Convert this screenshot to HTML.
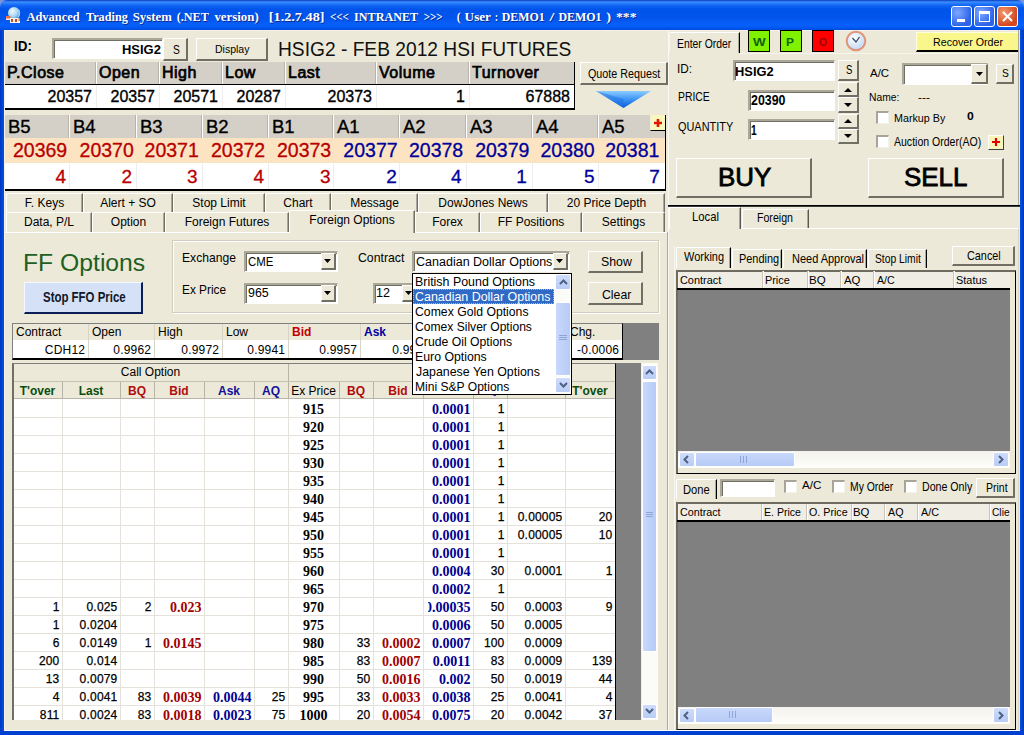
<!DOCTYPE html><html><head><meta charset="utf-8"><style>
*{margin:0;padding:0;box-sizing:border-box}
html,body{width:1024px;height:735px;overflow:hidden;background:#ECE9D8;font-family:"Liberation Sans",sans-serif;}
.a{position:absolute}
.serif{font-family:"Liberation Serif",serif}
.t{white-space:nowrap;line-height:1}
.btn{background:#ECE9D8;border-style:solid;border-width:1px 2px 2px 1px;border-color:#fff #716F64 #716F64 #fff;}
.sunk{background:#fff;border-style:solid;border-width:2px 1px 1px 2px;border-color:#ACA899 #fff #fff #ACA899;box-shadow:inset 1px 1px 0 #716F64;}
.sb{background:linear-gradient(#CFDCFB,#B9CCF5);border:1px solid #fff;border-radius:2px}
</style></head><body><div class="a " style="left:0px;top:0px;width:8px;height:8px;background:#7C93DF"></div>
<div class="a " style="left:1016px;top:0px;width:8px;height:8px;background:#7C93DF"></div>
<div class="a" style="left:0;top:0;width:1024px;height:30px;background:linear-gradient(#0A3CC0 0px,#3A8FFF 2px,#1568F6 5px,#0054EA 9px,#0255EC 18px,#0860FA 25px,#0058F0 28px,#0048DA 30px);border-radius:7px 7px 0 0"></div>
<div class="a " style="left:0px;top:30px;width:4px;height:705px;background:linear-gradient(90deg,#0036C2,#0054E3)"></div>
<div class="a " style="left:1020px;top:30px;width:4px;height:705px;background:linear-gradient(90deg,#0054E3,#0033B8)"></div>
<div class="a " style="left:0px;top:731px;width:1024px;height:4px;background:#0040D0"></div>
<svg class="a" style="left:0;top:0" width="700" height="30" font-family="Liberation Serif" font-weight="bold" font-size="13"><text x="27.4" y="22" textLength="53.300000000000004" lengthAdjust="spacingAndGlyphs" fill="#0A2A8E">Advanced</text><text x="26.4" y="21" textLength="53.300000000000004" lengthAdjust="spacingAndGlyphs" fill="#fff">Advanced</text><text x="86.9" y="22" textLength="42.0" lengthAdjust="spacingAndGlyphs" fill="#0A2A8E">Trading</text><text x="85.9" y="21" textLength="42.0" lengthAdjust="spacingAndGlyphs" fill="#fff">Trading</text><text x="133.7" y="22" textLength="39.10000000000002" lengthAdjust="spacingAndGlyphs" fill="#0A2A8E">System</text><text x="132.7" y="21" textLength="39.10000000000002" lengthAdjust="spacingAndGlyphs" fill="#fff">System</text><text x="177.7" y="22" textLength="32.20000000000002" lengthAdjust="spacingAndGlyphs" fill="#0A2A8E">(.NET</text><text x="176.7" y="21" textLength="32.20000000000002" lengthAdjust="spacingAndGlyphs" fill="#fff">(.NET</text><text x="215.4" y="22" textLength="44.29999999999998" lengthAdjust="spacingAndGlyphs" fill="#0A2A8E">version)</text><text x="214.4" y="21" textLength="44.29999999999998" lengthAdjust="spacingAndGlyphs" fill="#fff">version)</text><text x="269.8" y="22" textLength="55.69999999999999" lengthAdjust="spacingAndGlyphs" fill="#0A2A8E">[1.2.7.48]</text><text x="268.8" y="21" textLength="55.69999999999999" lengthAdjust="spacingAndGlyphs" fill="#fff">[1.2.7.48]</text><text x="330.9" y="22" textLength="19.0" lengthAdjust="spacingAndGlyphs" fill="#0A2A8E">&lt;&lt;&lt;</text><text x="329.9" y="21" textLength="19.0" lengthAdjust="spacingAndGlyphs" fill="#fff">&lt;&lt;&lt;</text><text x="355.1" y="22" textLength="64.09999999999997" lengthAdjust="spacingAndGlyphs" fill="#0A2A8E">INTRANET</text><text x="354.1" y="21" textLength="64.09999999999997" lengthAdjust="spacingAndGlyphs" fill="#fff">INTRANET</text><text x="424.7" y="22" textLength="18.900000000000034" lengthAdjust="spacingAndGlyphs" fill="#0A2A8E">&gt;&gt;&gt;</text><text x="423.7" y="21" textLength="18.900000000000034" lengthAdjust="spacingAndGlyphs" fill="#fff">&gt;&gt;&gt;</text><text x="457.8" y="22" textLength="3.8999999999999773" lengthAdjust="spacingAndGlyphs" fill="#0A2A8E">(</text><text x="456.8" y="21" textLength="3.8999999999999773" lengthAdjust="spacingAndGlyphs" fill="#fff">(</text><text x="465.6" y="22" textLength="26.399999999999977" lengthAdjust="spacingAndGlyphs" fill="#0A2A8E">User</text><text x="464.6" y="21" textLength="26.399999999999977" lengthAdjust="spacingAndGlyphs" fill="#fff">User</text><text x="495.9" y="22" textLength="3.0" lengthAdjust="spacingAndGlyphs" fill="#0A2A8E">:</text><text x="494.9" y="21" textLength="3.0" lengthAdjust="spacingAndGlyphs" fill="#fff">:</text><text x="502.8" y="22" textLength="42.900000000000034" lengthAdjust="spacingAndGlyphs" fill="#0A2A8E">DEMO1</text><text x="501.8" y="21" textLength="42.900000000000034" lengthAdjust="spacingAndGlyphs" fill="#fff">DEMO1</text><text x="550.6" y="22" textLength="4.899999999999977" lengthAdjust="spacingAndGlyphs" fill="#0A2A8E">/</text><text x="549.6" y="21" textLength="4.899999999999977" lengthAdjust="spacingAndGlyphs" fill="#fff">/</text><text x="559.4" y="22" textLength="43.0" lengthAdjust="spacingAndGlyphs" fill="#0A2A8E">DEMO1</text><text x="558.4" y="21" textLength="43.0" lengthAdjust="spacingAndGlyphs" fill="#fff">DEMO1</text><text x="607.2" y="22" textLength="4.7999999999999545" lengthAdjust="spacingAndGlyphs" fill="#0A2A8E">)</text><text x="606.2" y="21" textLength="4.7999999999999545" lengthAdjust="spacingAndGlyphs" fill="#fff">)</text><text x="617" y="22" textLength="20.5" lengthAdjust="spacingAndGlyphs" fill="#0A2A8E">***</text><text x="616" y="21" textLength="20.5" lengthAdjust="spacingAndGlyphs" fill="#fff">***</text></svg>
<svg class="a" style="left:0;top:0" width="24" height="24"><defs><radialGradient id="gl" cx=".35" cy=".35" r=".75"><stop offset="0" stop-color="#F2FAFF"/><stop offset=".6" stop-color="#A8D4F4"/><stop offset="1" stop-color="#3D8FDC"/></radialGradient></defs><circle cx="14" cy="13" r="6" fill="url(#gl)"/><path d="M18.5 9.5 Q21 13 18 17.5" stroke="#9ED2F8" stroke-width="1.2" fill="none"/><rect x="6" y="16" width="4.5" height="3" fill="#F07040"/><rect x="6" y="18.5" width="4.5" height="1.5" fill="#FFE8D8"/><rect x="10" y="18" width="10" height="5" fill="#FFF4EC"/><rect x="11" y="19" width="2" height="3" fill="#C84A20"/><rect x="15" y="19" width="2" height="3" fill="#C84A20"/><rect x="18.5" y="18" width="1.5" height="3" fill="#E8783C"/></svg>
<div class="a " style="left:951px;top:6px;width:21px;height:21px;background:radial-gradient(circle at 30% 30%,#7DA8FF,#2D63E8 70%);border:1px solid #fff;border-radius:3px"></div>
<div class="a " style="left:974px;top:6px;width:21px;height:21px;background:radial-gradient(circle at 30% 30%,#7DA8FF,#2D63E8 70%);border:1px solid #fff;border-radius:3px"></div>
<div class="a " style="left:997px;top:6px;width:21px;height:21px;background:radial-gradient(circle at 30% 30%,#F39A70,#D5481F 70%);border:1px solid #fff;border-radius:3px"></div>
<div class="a " style="left:957px;top:19px;width:8px;height:3px;background:#fff"></div>
<div class="a " style="left:979px;top:11px;width:11px;height:11px;border:1px solid #fff;border-top-width:3px"></div>
<svg class="a" style="left:1001px;top:10px" width="13" height="13"><path d="M2 2 L11 11 M11 2 L2 11" stroke="#fff" stroke-width="2"/></svg>
<div class="a " style="left:4px;top:30px;width:1016px;height:1px;background:#F4F2E8"></div>
<div class="a t" style="left:13.73px;top:38.81px;font-size:14.93px;font-weight:bold;color:#000;transform:scaleX(0.8989);transform-origin:0 0;">ID:</div>
<div class="a sunk" style="left:52px;top:38px;width:111px;height:21px;"></div>
<div class="a t" style="left:121.86px;top:42.82px;font-size:13.62px;font-weight:bold;color:#000;transform:scaleX(0.9508);transform-origin:0 0;">HSIG2</div>
<div class="a btn" style="left:163px;top:38px;width:25px;height:23px;"></div>
<div class="a t" style="left:172.94px;top:44.05px;font-size:12.17px;color:#000;transform:scaleX(0.8429);transform-origin:0 0;">S</div>
<div class="a btn" style="left:196px;top:38px;width:72px;height:23px;"></div>
<div class="a t" style="left:214.86px;top:44.19px;font-size:11.30px;color:#000;transform:scaleX(0.9288);transform-origin:0 0;">Display</div>
<div class="a t" style="left:278.46px;top:39.43px;font-size:20.43px;color:#111;transform:scaleX(0.9397);transform-origin:0 0;">HSIG2 - FEB 2012 HSI FUTURES</div>
<div class="a " style="left:4px;top:62px;width:571px;height:22px;background:#D4D0C8"></div>
<div class="a " style="left:4px;top:84px;width:571px;height:1px;background:#000"></div>
<div class="a " style="left:4px;top:85px;width:571px;height:23px;background:#fff"></div>
<div class="a " style="left:4px;top:108px;width:571px;height:2px;background:#000"></div>
<div class="a " style="left:574px;top:62px;width:1px;height:48px;background:#000"></div>
<div class="a t " style="left:7px;top:65px;font-size:16px;letter-spacing:0.5px;-webkit-text-stroke:0.7px #000">P.Close</div>
<div class="a t" style="left:4px;width:88px;top:88.5px;text-align:right;font-size:16px;-webkit-text-stroke:0.35px #000">20357</div>
<div class="a " style="left:96px;top:62px;width:1px;height:22px;background:#fff"></div>
<div class="a " style="left:95px;top:62px;width:1px;height:22px;background:#B8B4A8"></div>
<div class="a " style="left:96px;top:85px;width:1px;height:23px;background:#EEEEEE"></div>
<div class="a t " style="left:99px;top:65px;font-size:16px;letter-spacing:0.5px;-webkit-text-stroke:0.7px #000">Open</div>
<div class="a t" style="left:96px;width:59px;top:88.5px;text-align:right;font-size:16px;-webkit-text-stroke:0.35px #000">20357</div>
<div class="a " style="left:159px;top:62px;width:1px;height:22px;background:#fff"></div>
<div class="a " style="left:158px;top:62px;width:1px;height:22px;background:#B8B4A8"></div>
<div class="a " style="left:159px;top:85px;width:1px;height:23px;background:#EEEEEE"></div>
<div class="a t " style="left:162px;top:65px;font-size:16px;letter-spacing:0.5px;-webkit-text-stroke:0.7px #000">High</div>
<div class="a t" style="left:159px;width:59px;top:88.5px;text-align:right;font-size:16px;-webkit-text-stroke:0.35px #000">20571</div>
<div class="a " style="left:222px;top:62px;width:1px;height:22px;background:#fff"></div>
<div class="a " style="left:221px;top:62px;width:1px;height:22px;background:#B8B4A8"></div>
<div class="a " style="left:222px;top:85px;width:1px;height:23px;background:#EEEEEE"></div>
<div class="a t " style="left:225px;top:65px;font-size:16px;letter-spacing:0.5px;-webkit-text-stroke:0.7px #000">Low</div>
<div class="a t" style="left:222px;width:59px;top:88.5px;text-align:right;font-size:16px;-webkit-text-stroke:0.35px #000">20287</div>
<div class="a " style="left:285px;top:62px;width:1px;height:22px;background:#fff"></div>
<div class="a " style="left:284px;top:62px;width:1px;height:22px;background:#B8B4A8"></div>
<div class="a " style="left:285px;top:85px;width:1px;height:23px;background:#EEEEEE"></div>
<div class="a t " style="left:288px;top:65px;font-size:16px;letter-spacing:0.5px;-webkit-text-stroke:0.7px #000">Last</div>
<div class="a t" style="left:285px;width:87px;top:88.5px;text-align:right;font-size:16px;-webkit-text-stroke:0.35px #000">20373</div>
<div class="a " style="left:376px;top:62px;width:1px;height:22px;background:#fff"></div>
<div class="a " style="left:375px;top:62px;width:1px;height:22px;background:#B8B4A8"></div>
<div class="a " style="left:376px;top:85px;width:1px;height:23px;background:#EEEEEE"></div>
<div class="a t " style="left:379px;top:65px;font-size:16px;letter-spacing:0.5px;-webkit-text-stroke:0.7px #000">Volume</div>
<div class="a t" style="left:376px;width:89px;top:88.5px;text-align:right;font-size:16px;-webkit-text-stroke:0.35px #000">1</div>
<div class="a " style="left:469px;top:62px;width:1px;height:22px;background:#fff"></div>
<div class="a " style="left:468px;top:62px;width:1px;height:22px;background:#B8B4A8"></div>
<div class="a " style="left:469px;top:85px;width:1px;height:23px;background:#EEEEEE"></div>
<div class="a t " style="left:472px;top:65px;font-size:16px;letter-spacing:0.5px;-webkit-text-stroke:0.7px #000">Turnover</div>
<div class="a t" style="left:469px;width:101px;top:88.5px;text-align:right;font-size:16px;-webkit-text-stroke:0.35px #000">67888</div>
<div class="a btn" style="left:580px;top:62px;width:88px;height:23px;"></div>
<div class="a t" style="left:587.82px;top:68.48px;font-size:12.61px;color:#000;transform:scaleX(0.8519);transform-origin:0 0;">Quote Request</div>
<svg class="a" style="left:595px;top:89.5px" width="58" height="19"><defs><linearGradient id="tg" x1="0" y1="0" x2="0" y2="1"><stop offset="0" stop-color="#8CCBFF"/><stop offset=".5" stop-color="#3C94F4"/><stop offset="1" stop-color="#0A5BD8"/></linearGradient></defs><path d="M1 1 L56 1 L28.5 18 Z" fill="url(#tg)"/><path d="M1 1 L28.5 18 L28.5 9 Z" fill="#1F6FE0" opacity=".45"/></svg>
<div class="a " style="left:4px;top:115px;width:662px;height:23px;background:#D4D0C8"></div>
<div class="a " style="left:4px;top:138px;width:662px;height:25px;background:#FCE4C2"></div>
<div class="a " style="left:4px;top:163px;width:662px;height:26px;background:#fff"></div>
<div class="a " style="left:4px;top:189px;width:662px;height:2px;background:#000"></div>
<div class="a " style="left:665px;top:115px;width:1px;height:76px;background:#000"></div>
<div class="a t " style="left:8px;top:117.5px;font-size:18.5px;-webkit-text-stroke:0.35px #000">B5</div>
<div class="a t" style="left:4px;width:63.2px;top:140.5px;text-align:right;font-size:19.5px;color:#B80000;-webkit-text-stroke:0.3px #B80000">20369</div>
<div class="a t" style="left:4px;width:62.1px;top:167px;text-align:right;font-size:19px;color:#B80000;-webkit-text-stroke:0.3px #B80000">4</div>
<div class="a " style="left:69px;top:115px;width:1px;height:23px;background:#fff"></div>
<div class="a " style="left:68px;top:115px;width:1px;height:23px;background:#B8B4A8"></div>
<div class="a " style="left:69px;top:163px;width:1px;height:26px;background:#EEEEEE"></div>
<div class="a t " style="left:73px;top:117.5px;font-size:18.5px;-webkit-text-stroke:0.35px #000">B4</div>
<div class="a t" style="left:69px;width:64.8px;top:140.5px;text-align:right;font-size:19.5px;color:#B80000;-webkit-text-stroke:0.3px #B80000">20370</div>
<div class="a t" style="left:69px;width:63.1px;top:167px;text-align:right;font-size:19px;color:#B80000;-webkit-text-stroke:0.3px #B80000">2</div>
<div class="a " style="left:136px;top:115px;width:1px;height:23px;background:#fff"></div>
<div class="a " style="left:135px;top:115px;width:1px;height:23px;background:#B8B4A8"></div>
<div class="a " style="left:136px;top:163px;width:1px;height:26px;background:#EEEEEE"></div>
<div class="a t " style="left:140px;top:117.5px;font-size:18.5px;-webkit-text-stroke:0.35px #000">B3</div>
<div class="a t" style="left:136px;width:62.8px;top:140.5px;text-align:right;font-size:19.5px;color:#B80000;-webkit-text-stroke:0.3px #B80000">20371</div>
<div class="a t" style="left:136px;width:61.6px;top:167px;text-align:right;font-size:19px;color:#B80000;-webkit-text-stroke:0.3px #B80000">3</div>
<div class="a " style="left:202px;top:115px;width:1px;height:23px;background:#fff"></div>
<div class="a " style="left:201px;top:115px;width:1px;height:23px;background:#B8B4A8"></div>
<div class="a " style="left:202px;top:163px;width:1px;height:26px;background:#EEEEEE"></div>
<div class="a t " style="left:206px;top:117.5px;font-size:18.5px;-webkit-text-stroke:0.35px #000">B2</div>
<div class="a t" style="left:202px;width:63.2px;top:140.5px;text-align:right;font-size:19.5px;color:#B80000;-webkit-text-stroke:0.3px #B80000">20372</div>
<div class="a t" style="left:202px;width:62.1px;top:167px;text-align:right;font-size:19px;color:#B80000;-webkit-text-stroke:0.3px #B80000">4</div>
<div class="a " style="left:268px;top:115px;width:1px;height:23px;background:#fff"></div>
<div class="a " style="left:267px;top:115px;width:1px;height:23px;background:#B8B4A8"></div>
<div class="a " style="left:268px;top:163px;width:1px;height:26px;background:#EEEEEE"></div>
<div class="a t " style="left:272px;top:117.5px;font-size:18.5px;-webkit-text-stroke:0.35px #000">B1</div>
<div class="a t" style="left:268px;width:63.2px;top:140.5px;text-align:right;font-size:19.5px;color:#B80000;-webkit-text-stroke:0.3px #B80000">20373</div>
<div class="a t" style="left:268px;width:62.5px;top:167px;text-align:right;font-size:19px;color:#B80000;-webkit-text-stroke:0.3px #B80000">3</div>
<div class="a " style="left:333px;top:115px;width:1px;height:23px;background:#fff"></div>
<div class="a " style="left:332px;top:115px;width:1px;height:23px;background:#B8B4A8"></div>
<div class="a " style="left:333px;top:163px;width:1px;height:26px;background:#EEEEEE"></div>
<div class="a t " style="left:337px;top:117.5px;font-size:18.5px;-webkit-text-stroke:0.35px #000">A1</div>
<div class="a t" style="left:333px;width:64.6px;top:140.5px;text-align:right;font-size:19.5px;color:#00009A;-webkit-text-stroke:0.3px #00009A">20377</div>
<div class="a t" style="left:333px;width:63.9px;top:167px;text-align:right;font-size:19px;color:#00009A;-webkit-text-stroke:0.3px #00009A">2</div>
<div class="a " style="left:399px;top:115px;width:1px;height:23px;background:#fff"></div>
<div class="a " style="left:398px;top:115px;width:1px;height:23px;background:#B8B4A8"></div>
<div class="a " style="left:399px;top:163px;width:1px;height:26px;background:#EEEEEE"></div>
<div class="a t " style="left:403px;top:117.5px;font-size:18.5px;-webkit-text-stroke:0.35px #000">A2</div>
<div class="a t" style="left:399px;width:64.2px;top:140.5px;text-align:right;font-size:19.5px;color:#00009A;-webkit-text-stroke:0.3px #00009A">20378</div>
<div class="a t" style="left:399px;width:62.7px;top:167px;text-align:right;font-size:19px;color:#00009A;-webkit-text-stroke:0.3px #00009A">4</div>
<div class="a " style="left:466px;top:115px;width:1px;height:23px;background:#fff"></div>
<div class="a " style="left:465px;top:115px;width:1px;height:23px;background:#B8B4A8"></div>
<div class="a " style="left:466px;top:163px;width:1px;height:26px;background:#EEEEEE"></div>
<div class="a t " style="left:470px;top:117.5px;font-size:18.5px;-webkit-text-stroke:0.35px #000">A3</div>
<div class="a t" style="left:466px;width:63.4px;top:140.5px;text-align:right;font-size:19.5px;color:#00009A;-webkit-text-stroke:0.3px #00009A">20379</div>
<div class="a t" style="left:466px;width:60.8px;top:167px;text-align:right;font-size:19px;color:#00009A;-webkit-text-stroke:0.3px #00009A">1</div>
<div class="a " style="left:532px;top:115px;width:1px;height:23px;background:#fff"></div>
<div class="a " style="left:531px;top:115px;width:1px;height:23px;background:#B8B4A8"></div>
<div class="a " style="left:532px;top:163px;width:1px;height:26px;background:#EEEEEE"></div>
<div class="a t " style="left:536px;top:117.5px;font-size:18.5px;-webkit-text-stroke:0.35px #000">A4</div>
<div class="a t" style="left:532px;width:62.7px;top:140.5px;text-align:right;font-size:19.5px;color:#00009A;-webkit-text-stroke:0.3px #00009A">20380</div>
<div class="a t" style="left:532px;width:62.6px;top:167px;text-align:right;font-size:19px;color:#00009A;-webkit-text-stroke:0.3px #00009A">5</div>
<div class="a " style="left:598px;top:115px;width:1px;height:23px;background:#fff"></div>
<div class="a " style="left:597px;top:115px;width:1px;height:23px;background:#B8B4A8"></div>
<div class="a " style="left:598px;top:163px;width:1px;height:26px;background:#EEEEEE"></div>
<div class="a t " style="left:602px;top:117.5px;font-size:18.5px;-webkit-text-stroke:0.35px #000">A5</div>
<div class="a t" style="left:598px;width:61.4px;top:140.5px;text-align:right;font-size:19.5px;color:#00009A;-webkit-text-stroke:0.3px #00009A">20381</div>
<div class="a t" style="left:598px;width:61.8px;top:167px;text-align:right;font-size:19px;color:#00009A;-webkit-text-stroke:0.3px #00009A">7</div>
<div class="a " style="left:650px;top:115px;width:15px;height:16px;background:#FAF7BC;border-bottom:1px solid #000;border-left:1px solid #F0EFD8"></div>
<svg class="a" style="left:653px;top:118px" width="10" height="10"><path d="M5 1 V9 M1 5 H9" stroke="#E01808" stroke-width="2.6"/></svg>
<div class="a" style="left:6px;top:193px;width:77px;height:19px;border-top:1px solid #fff;border-left:1px solid #fff;border-right:1px solid #716F64;box-shadow:inset -1px 0 0 #ACA899;border-top-left-radius:2px;"></div>
<div class="a t" style="left:6px;width:77px;top:197px;text-align:center;font-size:12px">F. Keys</div>
<div class="a" style="left:83px;top:193px;width:90px;height:19px;border-top:1px solid #fff;border-left:1px solid #fff;border-right:1px solid #716F64;box-shadow:inset -1px 0 0 #ACA899;border-top-left-radius:2px;"></div>
<div class="a t" style="left:83px;width:90px;top:197px;text-align:center;font-size:12px">Alert + SO</div>
<div class="a" style="left:173px;top:193px;width:92px;height:19px;border-top:1px solid #fff;border-left:1px solid #fff;border-right:1px solid #716F64;box-shadow:inset -1px 0 0 #ACA899;border-top-left-radius:2px;"></div>
<div class="a t" style="left:173px;width:92px;top:197px;text-align:center;font-size:12px">Stop Limit</div>
<div class="a" style="left:265px;top:193px;width:66px;height:19px;border-top:1px solid #fff;border-left:1px solid #fff;border-right:1px solid #716F64;box-shadow:inset -1px 0 0 #ACA899;border-top-left-radius:2px;"></div>
<div class="a t" style="left:265px;width:66px;top:197px;text-align:center;font-size:12px">Chart</div>
<div class="a" style="left:331px;top:193px;width:87px;height:19px;border-top:1px solid #fff;border-left:1px solid #fff;border-right:1px solid #716F64;box-shadow:inset -1px 0 0 #ACA899;border-top-left-radius:2px;"></div>
<div class="a t" style="left:331px;width:87px;top:197px;text-align:center;font-size:12px">Message</div>
<div class="a" style="left:418px;top:193px;width:130px;height:19px;border-top:1px solid #fff;border-left:1px solid #fff;border-right:1px solid #716F64;box-shadow:inset -1px 0 0 #ACA899;border-top-left-radius:2px;"></div>
<div class="a t" style="left:418px;width:130px;top:197px;text-align:center;font-size:12px">DowJones News</div>
<div class="a" style="left:548px;top:193px;width:117px;height:19px;border-top:1px solid #fff;border-left:1px solid #fff;border-right:1px solid #716F64;box-shadow:inset -1px 0 0 #ACA899;border-top-left-radius:2px;"></div>
<div class="a t" style="left:548px;width:117px;top:197px;text-align:center;font-size:12px">20 Price Depth</div>
<div class="a" style="left:6px;top:212px;width:86px;height:20px;border-top:1px solid #fff;border-left:1px solid #fff;border-right:1px solid #716F64;box-shadow:inset -1px 0 0 #ACA899;border-top-left-radius:2px;"></div>
<div class="a t" style="left:6px;width:86px;top:216px;text-align:center;font-size:12px">Data, P/L</div>
<div class="a" style="left:92px;top:212px;width:73px;height:20px;border-top:1px solid #fff;border-left:1px solid #fff;border-right:1px solid #716F64;box-shadow:inset -1px 0 0 #ACA899;border-top-left-radius:2px;"></div>
<div class="a t" style="left:92px;width:73px;top:216px;text-align:center;font-size:12px">Option</div>
<div class="a" style="left:165px;top:212px;width:124px;height:20px;border-top:1px solid #fff;border-left:1px solid #fff;border-right:1px solid #716F64;box-shadow:inset -1px 0 0 #ACA899;border-top-left-radius:2px;"></div>
<div class="a t" style="left:165px;width:124px;top:216px;text-align:center;font-size:12px">Foreign Futures</div>
<div class="a" style="left:289px;top:210px;width:126px;height:23px;border-top:1px solid #fff;border-left:1px solid #fff;border-right:1px solid #716F64;box-shadow:inset -1px 0 0 #ACA899;border-top-left-radius:2px;background:#ECE9D8"></div>
<div class="a t" style="left:289px;width:126px;top:214px;text-align:center;font-size:12px">Foreign Options</div>
<div class="a" style="left:415px;top:212px;width:65px;height:20px;border-top:1px solid #fff;border-left:1px solid #fff;border-right:1px solid #716F64;box-shadow:inset -1px 0 0 #ACA899;border-top-left-radius:2px;"></div>
<div class="a t" style="left:415px;width:65px;top:216px;text-align:center;font-size:12px">Forex</div>
<div class="a" style="left:480px;top:212px;width:102px;height:20px;border-top:1px solid #fff;border-left:1px solid #fff;border-right:1px solid #716F64;box-shadow:inset -1px 0 0 #ACA899;border-top-left-radius:2px;"></div>
<div class="a t" style="left:480px;width:102px;top:216px;text-align:center;font-size:12px">FF Positions</div>
<div class="a" style="left:582px;top:212px;width:83px;height:20px;border-top:1px solid #fff;border-left:1px solid #fff;border-right:1px solid #716F64;box-shadow:inset -1px 0 0 #ACA899;border-top-left-radius:2px;"></div>
<div class="a t" style="left:582px;width:83px;top:216px;text-align:center;font-size:12px">Settings</div>
<div class="a " style="left:4px;top:232px;width:285px;height:1px;background:#fff"></div>
<div class="a " style="left:415px;top:232px;width:252px;height:1px;background:#fff"></div>
<div class="a " style="left:667px;top:232px;width:1px;height:499px;background:#ACA899"></div>
<div class="a t" style="left:22.82px;top:251.54px;font-size:23.48px;color:#1F5F1F;transform:scaleX(1.0529);transform-origin:0 0;">FF Options</div>
<div class="a " style="left:24px;top:282px;width:119px;height:32px;background:#D5E1F6;border-top:1px solid #F4F8FF;border-left:1px solid #F4F8FF;border-right:2px solid #0A1E55;border-bottom:2px solid #0A1E55"></div>
<div class="a t" style="left:42.56px;top:291.20px;font-size:13.77px;font-weight:bold;color:#101828;transform:scaleX(0.8314);transform-origin:0 0;">Stop FFO Price</div>
<div class="a " style="left:172px;top:240px;width:487px;height:73px;border:1px solid #D0CDBF;box-shadow:inset 1px 1px 0 #fff, 1px 1px 0 #fff"></div>
<div class="a t" style="left:181.73px;top:251.76px;font-size:12.75px;color:#000;transform:scaleX(0.9511);transform-origin:0 0;">Exchange</div>
<div class="a t" style="left:181.75px;top:284.03px;font-size:12.32px;color:#000;transform:scaleX(0.9597);transform-origin:0 0;">Ex Price</div>
<div class="a t" style="left:357.99px;top:251.76px;font-size:12.75px;color:#000;transform:scaleX(0.9633);transform-origin:0 0;">Contract</div>
<div class="a sunk" style="left:244px;top:251px;width:94px;height:21px;"></div>
<div class="a btn" style="left:321px;top:253px;width:15px;height:17px;"></div>
<svg class="a" style="left:324px;top:259px" width="8" height="5"><path d="M0 0 H7 L3.5 4 Z" fill="#000"/></svg>
<div class="a t" style="left:248.23px;top:255.74px;font-size:12.90px;color:#000;transform:scaleX(0.8881);transform-origin:0 0;">CME</div>
<div class="a sunk" style="left:244px;top:283px;width:94px;height:21px;"></div>
<div class="a btn" style="left:321px;top:285px;width:15px;height:17px;"></div>
<svg class="a" style="left:324px;top:291px" width="8" height="5"><path d="M0 0 H7 L3.5 4 Z" fill="#000"/></svg>
<div class="a t" style="left:248.24px;top:287.46px;font-size:12.75px;color:#000;transform:scaleX(0.9727);transform-origin:0 0;">965</div>
<div class="a sunk" style="left:373px;top:283px;width:46px;height:21px;"></div>
<div class="a btn" style="left:402px;top:285px;width:15px;height:17px;"></div>
<svg class="a" style="left:405px;top:291px" width="8" height="5"><path d="M0 0 H7 L3.5 4 Z" fill="#000"/></svg>
<div class="a t" style="left:375.56px;top:287.46px;font-size:12.75px;color:#000;transform:scaleX(0.9871);transform-origin:0 0;">12</div>
<div class="a sunk" style="left:412px;top:251px;width:158px;height:21px;"></div>
<div class="a btn" style="left:553px;top:253px;width:15px;height:17px;"></div>
<svg class="a" style="left:556px;top:259px" width="8" height="5"><path d="M0 0 H7 L3.5 4 Z" fill="#000"/></svg>
<div class="a t" style="left:415.67px;top:255.58px;font-size:12.61px;color:#000;transform:scaleX(0.9927);transform-origin:0 0;">Canadian Dollar Options</div>
<div class="a btn" style="left:588px;top:251px;width:55px;height:22px;"></div>
<div class="a t" style="left:601.15px;top:255.44px;font-size:13.48px;color:#000;transform:scaleX(0.9138);transform-origin:0 0;">Show</div>
<div class="a btn" style="left:588px;top:282px;width:55px;height:23px;"></div>
<div class="a t" style="left:602.39px;top:287.67px;font-size:13.33px;color:#000;transform:scaleX(0.9213);transform-origin:0 0;">Clear</div>
<div class="a " style="left:12px;top:323px;width:611px;height:37px;background:#fff;border-left:1px solid #808080;border-top:1px solid #808080;border-right:1px solid #000;border-bottom:2px solid #000"></div>
<div class="a " style="left:13px;top:324px;width:609px;height:16px;background:#ECE9D8"></div>
<div class="a t " style="left:16px;top:326px;font-size:12px;color:#000;">Contract</div>
<div class="a t" style="left:12px;width:73.2px;top:343.5px;text-align:right;font-size:12px;letter-spacing:.2px">CDH12</div>
<div class="a " style="left:88px;top:324px;width:1px;height:34px;background:#D8D4C8"></div>
<div class="a t " style="left:92px;top:326px;font-size:12px;color:#000;">Open</div>
<div class="a t" style="left:88px;width:63.2px;top:343.5px;text-align:right;font-size:12px;letter-spacing:.2px">0.9962</div>
<div class="a " style="left:154px;top:324px;width:1px;height:34px;background:#D8D4C8"></div>
<div class="a t " style="left:158px;top:326px;font-size:12px;color:#000;">High</div>
<div class="a t" style="left:154px;width:65.2px;top:343.5px;text-align:right;font-size:12px;letter-spacing:.2px">0.9972</div>
<div class="a " style="left:222px;top:324px;width:1px;height:34px;background:#D8D4C8"></div>
<div class="a t " style="left:226px;top:326px;font-size:12px;color:#000;">Low</div>
<div class="a t" style="left:222px;width:63.2px;top:343.5px;text-align:right;font-size:12px;letter-spacing:.2px">0.9941</div>
<div class="a " style="left:288px;top:324px;width:1px;height:34px;background:#D8D4C8"></div>
<div class="a t " style="left:292px;top:326px;font-size:12px;color:#C00000;font-weight:bold">Bid</div>
<div class="a t" style="left:288px;width:69.2px;top:343.5px;text-align:right;font-size:12px;letter-spacing:.2px">0.9957</div>
<div class="a " style="left:360px;top:324px;width:1px;height:34px;background:#D8D4C8"></div>
<div class="a t " style="left:364px;top:326px;font-size:12px;color:#0000A0;font-weight:bold">Ask</div>
<div class="a t" style="left:360px;width:70.2px;top:343.5px;text-align:right;font-size:12px;letter-spacing:.2px">0.9962</div>
<div class="a " style="left:433px;top:324px;width:1px;height:34px;background:#D8D4C8"></div>
<div class="a t " style="left:437px;top:326px;font-size:12px;color:#000;">Last</div>
<div class="a t" style="left:433px;width:130.2px;top:343.5px;text-align:right;font-size:12px;letter-spacing:.2px"></div>
<div class="a " style="left:566px;top:324px;width:1px;height:34px;background:#D8D4C8"></div>
<div class="a t " style="left:570px;top:326px;font-size:12px;color:#000;">Chg.</div>
<div class="a t" style="left:566px;width:53.2px;top:343.5px;text-align:right;font-size:12px;letter-spacing:.2px">-0.0006</div>
<div class="a " style="left:623px;top:323px;width:36px;height:37px;background:#808080"></div>
<div class="a " style="left:12px;top:363px;width:604px;height:357px;background:#fff;border-left:2px solid #716F64;border-top:1px solid #808080;border-right:1px solid #000"></div>
<div class="a " style="left:14px;top:364px;width:601px;height:35px;background:#ECE9D8"></div>
<div class="a " style="left:616px;top:363px;width:25px;height:357px;background:#808080"></div>
<div class="a t " style="left:13px;top:366px;font-size:12px;width:275px;text-align:center">Call Option</div>
<div class="a " style="left:288px;top:364px;width:1px;height:17px;background:#B8B5A8"></div>
<div class="a " style="left:14px;top:381px;width:601px;height:1px;background:#C4C1B4"></div>
<div class="a" style="left:13px;width:49px;top:382px;height:16px;overflow:hidden"><div class="a t" style="left:0;width:49px;top:3px;text-align:center;font-size:12px;color:#0B4D0B;font-weight:bold;">T'over</div></div>
<div class="a " style="left:62px;top:382px;width:1px;height:16px;background:#B8B5A8"></div>
<div class="a " style="left:62px;top:399px;width:1px;height:321px;background:#E4E2DA"></div>
<div class="a" style="left:62px;width:58px;top:382px;height:16px;overflow:hidden"><div class="a t" style="left:0;width:58px;top:3px;text-align:center;font-size:12px;color:#0B4D0B;font-weight:bold;">Last</div></div>
<div class="a " style="left:120px;top:382px;width:1px;height:16px;background:#B8B5A8"></div>
<div class="a " style="left:120px;top:399px;width:1px;height:321px;background:#E4E2DA"></div>
<div class="a" style="left:120px;width:34px;top:382px;height:16px;overflow:hidden"><div class="a t" style="left:0;width:34px;top:3px;text-align:center;font-size:12px;color:#B00C0C;font-weight:bold;">BQ</div></div>
<div class="a " style="left:154px;top:382px;width:1px;height:16px;background:#B8B5A8"></div>
<div class="a " style="left:154px;top:399px;width:1px;height:321px;background:#E4E2DA"></div>
<div class="a" style="left:154px;width:50px;top:382px;height:16px;overflow:hidden"><div class="a t" style="left:0;width:50px;top:3px;text-align:center;font-size:12px;color:#B00C0C;font-weight:bold;">Bid</div></div>
<div class="a " style="left:204px;top:382px;width:1px;height:16px;background:#B8B5A8"></div>
<div class="a " style="left:204px;top:399px;width:1px;height:321px;background:#E4E2DA"></div>
<div class="a" style="left:204px;width:50px;top:382px;height:16px;overflow:hidden"><div class="a t" style="left:0;width:50px;top:3px;text-align:center;font-size:12px;color:#10109C;font-weight:bold;">Ask</div></div>
<div class="a " style="left:254px;top:382px;width:1px;height:16px;background:#B8B5A8"></div>
<div class="a " style="left:254px;top:399px;width:1px;height:321px;background:#E4E2DA"></div>
<div class="a" style="left:254px;width:34px;top:382px;height:16px;overflow:hidden"><div class="a t" style="left:0;width:34px;top:3px;text-align:center;font-size:12px;color:#10109C;font-weight:bold;">AQ</div></div>
<div class="a " style="left:288px;top:382px;width:1px;height:16px;background:#B8B5A8"></div>
<div class="a " style="left:288px;top:399px;width:1px;height:321px;background:#E4E2DA"></div>
<div class="a" style="left:288px;width:51px;top:382px;height:16px;overflow:hidden"><div class="a t" style="left:0;width:51px;top:3px;text-align:center;font-size:12px;color:#000;">Ex Price</div></div>
<div class="a " style="left:339px;top:382px;width:1px;height:16px;background:#B8B5A8"></div>
<div class="a " style="left:339px;top:399px;width:1px;height:321px;background:#E4E2DA"></div>
<div class="a" style="left:339px;width:34px;top:382px;height:16px;overflow:hidden"><div class="a t" style="left:0;width:34px;top:3px;text-align:center;font-size:12px;color:#B00C0C;font-weight:bold;">BQ</div></div>
<div class="a " style="left:373px;top:382px;width:1px;height:16px;background:#B8B5A8"></div>
<div class="a " style="left:373px;top:399px;width:1px;height:321px;background:#E4E2DA"></div>
<div class="a" style="left:373px;width:50px;top:382px;height:14px;overflow:hidden"><div class="a t" style="left:0;width:50px;top:3px;text-align:center;font-size:12px;color:#B00C0C;font-weight:bold;">Bid</div></div>
<div class="a " style="left:423px;top:382px;width:1px;height:16px;background:#B8B5A8"></div>
<div class="a " style="left:423px;top:399px;width:1px;height:321px;background:#E4E2DA"></div>
<div class="a" style="left:423px;width:50px;top:382px;height:14px;overflow:hidden"><div class="a t" style="left:0;width:50px;top:3px;text-align:center;font-size:12px;color:#10109C;font-weight:bold;">Ask</div></div>
<div class="a " style="left:473px;top:382px;width:1px;height:16px;background:#B8B5A8"></div>
<div class="a " style="left:473px;top:399px;width:1px;height:321px;background:#E4E2DA"></div>
<div class="a" style="left:473px;width:34px;top:382px;height:14px;overflow:hidden"><div class="a t" style="left:0;width:34px;top:3px;text-align:center;font-size:12px;color:#10109C;font-weight:bold;">AQ</div></div>
<div class="a " style="left:507px;top:382px;width:1px;height:16px;background:#B8B5A8"></div>
<div class="a " style="left:507px;top:399px;width:1px;height:321px;background:#E4E2DA"></div>
<div class="a" style="left:507px;width:58px;top:382px;height:14px;overflow:hidden"><div class="a t" style="left:0;width:58px;top:3px;text-align:center;font-size:12px;color:#0B4D0B;font-weight:bold;">Last</div></div>
<div class="a " style="left:565px;top:382px;width:1px;height:16px;background:#B8B5A8"></div>
<div class="a " style="left:565px;top:399px;width:1px;height:321px;background:#E4E2DA"></div>
<div class="a" style="left:565px;width:50px;top:382px;height:16px;overflow:hidden"><div class="a t" style="left:0;width:50px;top:3px;text-align:center;font-size:12px;color:#0B4D0B;font-weight:bold;">T'over</div></div>
<div class="a " style="left:14px;top:398px;width:601px;height:1px;background:#B8B5A8"></div>
<div class="a" style="left:14px;top:399px;width:601px;height:321px;overflow:hidden">
<div class="a" style="left:0;top:18px;width:601px;height:1px;background:#E4E2DA"></div>
<div class="a t" style="left:274px;width:51px;top:3.5px;text-align:center;font-family:'Liberation Serif',serif;font-weight:bold;font-size:14px;color:#000">915</div>
<div class="a" style="left:413.5px;width:43.0px;top:3.5px;height:16px;overflow:hidden"><div class="a t" style="right:0;top:0;font-family:'Liberation Serif',serif;font-weight:bold;font-size:14px;color:#000090">0.0001</div></div>
<div class="a" style="left:462px;width:28.5px;top:4px;height:16px;overflow:hidden"><div class="a t" style="right:0;top:0;font-size:12px;letter-spacing:.2px;color:#000;-webkit-text-stroke:0.25px #000">1</div></div>
<div class="a" style="left:0;top:36px;width:601px;height:1px;background:#E4E2DA"></div>
<div class="a t" style="left:274px;width:51px;top:21.5px;text-align:center;font-family:'Liberation Serif',serif;font-weight:bold;font-size:14px;color:#000">920</div>
<div class="a" style="left:413.5px;width:43.0px;top:21.5px;height:16px;overflow:hidden"><div class="a t" style="right:0;top:0;font-family:'Liberation Serif',serif;font-weight:bold;font-size:14px;color:#000090">0.0001</div></div>
<div class="a" style="left:462px;width:28.5px;top:22px;height:16px;overflow:hidden"><div class="a t" style="right:0;top:0;font-size:12px;letter-spacing:.2px;color:#000;-webkit-text-stroke:0.25px #000">1</div></div>
<div class="a" style="left:0;top:54px;width:601px;height:1px;background:#E4E2DA"></div>
<div class="a t" style="left:274px;width:51px;top:39.5px;text-align:center;font-family:'Liberation Serif',serif;font-weight:bold;font-size:14px;color:#000">925</div>
<div class="a" style="left:413.5px;width:43.0px;top:39.5px;height:16px;overflow:hidden"><div class="a t" style="right:0;top:0;font-family:'Liberation Serif',serif;font-weight:bold;font-size:14px;color:#000090">0.0001</div></div>
<div class="a" style="left:462px;width:28.5px;top:40px;height:16px;overflow:hidden"><div class="a t" style="right:0;top:0;font-size:12px;letter-spacing:.2px;color:#000;-webkit-text-stroke:0.25px #000">1</div></div>
<div class="a" style="left:0;top:72px;width:601px;height:1px;background:#E4E2DA"></div>
<div class="a t" style="left:274px;width:51px;top:57.5px;text-align:center;font-family:'Liberation Serif',serif;font-weight:bold;font-size:14px;color:#000">930</div>
<div class="a" style="left:413.5px;width:43.0px;top:57.5px;height:16px;overflow:hidden"><div class="a t" style="right:0;top:0;font-family:'Liberation Serif',serif;font-weight:bold;font-size:14px;color:#000090">0.0001</div></div>
<div class="a" style="left:462px;width:28.5px;top:58px;height:16px;overflow:hidden"><div class="a t" style="right:0;top:0;font-size:12px;letter-spacing:.2px;color:#000;-webkit-text-stroke:0.25px #000">1</div></div>
<div class="a" style="left:0;top:90px;width:601px;height:1px;background:#E4E2DA"></div>
<div class="a t" style="left:274px;width:51px;top:75.5px;text-align:center;font-family:'Liberation Serif',serif;font-weight:bold;font-size:14px;color:#000">935</div>
<div class="a" style="left:413.5px;width:43.0px;top:75.5px;height:16px;overflow:hidden"><div class="a t" style="right:0;top:0;font-family:'Liberation Serif',serif;font-weight:bold;font-size:14px;color:#000090">0.0001</div></div>
<div class="a" style="left:462px;width:28.5px;top:76px;height:16px;overflow:hidden"><div class="a t" style="right:0;top:0;font-size:12px;letter-spacing:.2px;color:#000;-webkit-text-stroke:0.25px #000">1</div></div>
<div class="a" style="left:0;top:108px;width:601px;height:1px;background:#E4E2DA"></div>
<div class="a t" style="left:274px;width:51px;top:93.5px;text-align:center;font-family:'Liberation Serif',serif;font-weight:bold;font-size:14px;color:#000">940</div>
<div class="a" style="left:413.5px;width:43.0px;top:93.5px;height:16px;overflow:hidden"><div class="a t" style="right:0;top:0;font-family:'Liberation Serif',serif;font-weight:bold;font-size:14px;color:#000090">0.0001</div></div>
<div class="a" style="left:462px;width:28.5px;top:94px;height:16px;overflow:hidden"><div class="a t" style="right:0;top:0;font-size:12px;letter-spacing:.2px;color:#000;-webkit-text-stroke:0.25px #000">1</div></div>
<div class="a" style="left:0;top:126px;width:601px;height:1px;background:#E4E2DA"></div>
<div class="a t" style="left:274px;width:51px;top:111.5px;text-align:center;font-family:'Liberation Serif',serif;font-weight:bold;font-size:14px;color:#000">945</div>
<div class="a" style="left:413.5px;width:43.0px;top:111.5px;height:16px;overflow:hidden"><div class="a t" style="right:0;top:0;font-family:'Liberation Serif',serif;font-weight:bold;font-size:14px;color:#000090">0.0001</div></div>
<div class="a" style="left:462px;width:28.5px;top:112px;height:16px;overflow:hidden"><div class="a t" style="right:0;top:0;font-size:12px;letter-spacing:.2px;color:#000;-webkit-text-stroke:0.25px #000">1</div></div>
<div class="a" style="left:496px;width:52.5px;top:112px;height:16px;overflow:hidden"><div class="a t" style="right:0;top:0;font-size:12px;letter-spacing:.2px;color:#000;-webkit-text-stroke:0.25px #000">0.00005</div></div>
<div class="a" style="left:554px;width:44.5px;top:112px;height:16px;overflow:hidden"><div class="a t" style="right:0;top:0;font-size:12px;letter-spacing:.2px;color:#000;-webkit-text-stroke:0.25px #000">20</div></div>
<div class="a" style="left:0;top:144px;width:601px;height:1px;background:#E4E2DA"></div>
<div class="a t" style="left:274px;width:51px;top:129.5px;text-align:center;font-family:'Liberation Serif',serif;font-weight:bold;font-size:14px;color:#000">950</div>
<div class="a" style="left:413.5px;width:43.0px;top:129.5px;height:16px;overflow:hidden"><div class="a t" style="right:0;top:0;font-family:'Liberation Serif',serif;font-weight:bold;font-size:14px;color:#000090">0.0001</div></div>
<div class="a" style="left:462px;width:28.5px;top:130px;height:16px;overflow:hidden"><div class="a t" style="right:0;top:0;font-size:12px;letter-spacing:.2px;color:#000;-webkit-text-stroke:0.25px #000">1</div></div>
<div class="a" style="left:496px;width:52.5px;top:130px;height:16px;overflow:hidden"><div class="a t" style="right:0;top:0;font-size:12px;letter-spacing:.2px;color:#000;-webkit-text-stroke:0.25px #000">0.00005</div></div>
<div class="a" style="left:554px;width:44.5px;top:130px;height:16px;overflow:hidden"><div class="a t" style="right:0;top:0;font-size:12px;letter-spacing:.2px;color:#000;-webkit-text-stroke:0.25px #000">10</div></div>
<div class="a" style="left:0;top:162px;width:601px;height:1px;background:#E4E2DA"></div>
<div class="a t" style="left:274px;width:51px;top:147.5px;text-align:center;font-family:'Liberation Serif',serif;font-weight:bold;font-size:14px;color:#000">955</div>
<div class="a" style="left:413.5px;width:43.0px;top:147.5px;height:16px;overflow:hidden"><div class="a t" style="right:0;top:0;font-family:'Liberation Serif',serif;font-weight:bold;font-size:14px;color:#000090">0.0001</div></div>
<div class="a" style="left:462px;width:28.5px;top:148px;height:16px;overflow:hidden"><div class="a t" style="right:0;top:0;font-size:12px;letter-spacing:.2px;color:#000;-webkit-text-stroke:0.25px #000">1</div></div>
<div class="a" style="left:0;top:180px;width:601px;height:1px;background:#E4E2DA"></div>
<div class="a t" style="left:274px;width:51px;top:165.5px;text-align:center;font-family:'Liberation Serif',serif;font-weight:bold;font-size:14px;color:#000">960</div>
<div class="a" style="left:413.5px;width:43.0px;top:165.5px;height:16px;overflow:hidden"><div class="a t" style="right:0;top:0;font-family:'Liberation Serif',serif;font-weight:bold;font-size:14px;color:#000090">0.0004</div></div>
<div class="a" style="left:462px;width:28.5px;top:166px;height:16px;overflow:hidden"><div class="a t" style="right:0;top:0;font-size:12px;letter-spacing:.2px;color:#000;-webkit-text-stroke:0.25px #000">30</div></div>
<div class="a" style="left:496px;width:52.5px;top:166px;height:16px;overflow:hidden"><div class="a t" style="right:0;top:0;font-size:12px;letter-spacing:.2px;color:#000;-webkit-text-stroke:0.25px #000">0.0001</div></div>
<div class="a" style="left:554px;width:44.5px;top:166px;height:16px;overflow:hidden"><div class="a t" style="right:0;top:0;font-size:12px;letter-spacing:.2px;color:#000;-webkit-text-stroke:0.25px #000">1</div></div>
<div class="a" style="left:0;top:198px;width:601px;height:1px;background:#E4E2DA"></div>
<div class="a t" style="left:274px;width:51px;top:183.5px;text-align:center;font-family:'Liberation Serif',serif;font-weight:bold;font-size:14px;color:#000">965</div>
<div class="a" style="left:413.5px;width:43.0px;top:183.5px;height:16px;overflow:hidden"><div class="a t" style="right:0;top:0;font-family:'Liberation Serif',serif;font-weight:bold;font-size:14px;color:#000090">0.0002</div></div>
<div class="a" style="left:462px;width:28.5px;top:184px;height:16px;overflow:hidden"><div class="a t" style="right:0;top:0;font-size:12px;letter-spacing:.2px;color:#000;-webkit-text-stroke:0.25px #000">1</div></div>
<div class="a" style="left:0;top:216px;width:601px;height:1px;background:#E4E2DA"></div>
<div class="a" style="left:2px;width:43.5px;top:202px;height:16px;overflow:hidden"><div class="a t" style="right:0;top:0;font-size:12px;letter-spacing:.2px;color:#000;-webkit-text-stroke:0.25px #000">1</div></div>
<div class="a" style="left:51px;width:52.5px;top:202px;height:16px;overflow:hidden"><div class="a t" style="right:0;top:0;font-size:12px;letter-spacing:.2px;color:#000;-webkit-text-stroke:0.25px #000">0.025</div></div>
<div class="a" style="left:109px;width:28.5px;top:202px;height:16px;overflow:hidden"><div class="a t" style="right:0;top:0;font-size:12px;letter-spacing:.2px;color:#000;-webkit-text-stroke:0.25px #000">2</div></div>
<div class="a" style="left:144.5px;width:43.0px;top:201.5px;height:16px;overflow:hidden"><div class="a t" style="right:0;top:0;font-family:'Liberation Serif',serif;font-weight:bold;font-size:14px;color:#A00000">0.023</div></div>
<div class="a t" style="left:274px;width:51px;top:201.5px;text-align:center;font-family:'Liberation Serif',serif;font-weight:bold;font-size:14px;color:#000">970</div>
<div class="a" style="left:413.5px;width:43.0px;top:201.5px;height:16px;overflow:hidden"><div class="a t" style="right:0;top:0;font-family:'Liberation Serif',serif;font-weight:bold;font-size:14px;color:#000090">0.00035</div></div>
<div class="a" style="left:462px;width:28.5px;top:202px;height:16px;overflow:hidden"><div class="a t" style="right:0;top:0;font-size:12px;letter-spacing:.2px;color:#000;-webkit-text-stroke:0.25px #000">50</div></div>
<div class="a" style="left:496px;width:52.5px;top:202px;height:16px;overflow:hidden"><div class="a t" style="right:0;top:0;font-size:12px;letter-spacing:.2px;color:#000;-webkit-text-stroke:0.25px #000">0.0003</div></div>
<div class="a" style="left:554px;width:44.5px;top:202px;height:16px;overflow:hidden"><div class="a t" style="right:0;top:0;font-size:12px;letter-spacing:.2px;color:#000;-webkit-text-stroke:0.25px #000">9</div></div>
<div class="a" style="left:0;top:234px;width:601px;height:1px;background:#E4E2DA"></div>
<div class="a" style="left:2px;width:43.5px;top:220px;height:16px;overflow:hidden"><div class="a t" style="right:0;top:0;font-size:12px;letter-spacing:.2px;color:#000;-webkit-text-stroke:0.25px #000">1</div></div>
<div class="a" style="left:51px;width:52.5px;top:220px;height:16px;overflow:hidden"><div class="a t" style="right:0;top:0;font-size:12px;letter-spacing:.2px;color:#000;-webkit-text-stroke:0.25px #000">0.0204</div></div>
<div class="a t" style="left:274px;width:51px;top:219.5px;text-align:center;font-family:'Liberation Serif',serif;font-weight:bold;font-size:14px;color:#000">975</div>
<div class="a" style="left:413.5px;width:43.0px;top:219.5px;height:16px;overflow:hidden"><div class="a t" style="right:0;top:0;font-family:'Liberation Serif',serif;font-weight:bold;font-size:14px;color:#000090">0.0006</div></div>
<div class="a" style="left:462px;width:28.5px;top:220px;height:16px;overflow:hidden"><div class="a t" style="right:0;top:0;font-size:12px;letter-spacing:.2px;color:#000;-webkit-text-stroke:0.25px #000">50</div></div>
<div class="a" style="left:496px;width:52.5px;top:220px;height:16px;overflow:hidden"><div class="a t" style="right:0;top:0;font-size:12px;letter-spacing:.2px;color:#000;-webkit-text-stroke:0.25px #000">0.0005</div></div>
<div class="a" style="left:0;top:252px;width:601px;height:1px;background:#E4E2DA"></div>
<div class="a" style="left:2px;width:43.5px;top:238px;height:16px;overflow:hidden"><div class="a t" style="right:0;top:0;font-size:12px;letter-spacing:.2px;color:#000;-webkit-text-stroke:0.25px #000">6</div></div>
<div class="a" style="left:51px;width:52.5px;top:238px;height:16px;overflow:hidden"><div class="a t" style="right:0;top:0;font-size:12px;letter-spacing:.2px;color:#000;-webkit-text-stroke:0.25px #000">0.0149</div></div>
<div class="a" style="left:109px;width:28.5px;top:238px;height:16px;overflow:hidden"><div class="a t" style="right:0;top:0;font-size:12px;letter-spacing:.2px;color:#000;-webkit-text-stroke:0.25px #000">1</div></div>
<div class="a" style="left:144.5px;width:43.0px;top:237.5px;height:16px;overflow:hidden"><div class="a t" style="right:0;top:0;font-family:'Liberation Serif',serif;font-weight:bold;font-size:14px;color:#A00000">0.0145</div></div>
<div class="a t" style="left:274px;width:51px;top:237.5px;text-align:center;font-family:'Liberation Serif',serif;font-weight:bold;font-size:14px;color:#000">980</div>
<div class="a" style="left:328px;width:28.5px;top:238px;height:16px;overflow:hidden"><div class="a t" style="right:0;top:0;font-size:12px;letter-spacing:.2px;color:#000;-webkit-text-stroke:0.25px #000">33</div></div>
<div class="a" style="left:363.5px;width:43.0px;top:237.5px;height:16px;overflow:hidden"><div class="a t" style="right:0;top:0;font-family:'Liberation Serif',serif;font-weight:bold;font-size:14px;color:#A00000">0.0002</div></div>
<div class="a" style="left:413.5px;width:43.0px;top:237.5px;height:16px;overflow:hidden"><div class="a t" style="right:0;top:0;font-family:'Liberation Serif',serif;font-weight:bold;font-size:14px;color:#000090">0.0007</div></div>
<div class="a" style="left:462px;width:28.5px;top:238px;height:16px;overflow:hidden"><div class="a t" style="right:0;top:0;font-size:12px;letter-spacing:.2px;color:#000;-webkit-text-stroke:0.25px #000">100</div></div>
<div class="a" style="left:496px;width:52.5px;top:238px;height:16px;overflow:hidden"><div class="a t" style="right:0;top:0;font-size:12px;letter-spacing:.2px;color:#000;-webkit-text-stroke:0.25px #000">0.0009</div></div>
<div class="a" style="left:0;top:270px;width:601px;height:1px;background:#E4E2DA"></div>
<div class="a" style="left:2px;width:43.5px;top:256px;height:16px;overflow:hidden"><div class="a t" style="right:0;top:0;font-size:12px;letter-spacing:.2px;color:#000;-webkit-text-stroke:0.25px #000">200</div></div>
<div class="a" style="left:51px;width:52.5px;top:256px;height:16px;overflow:hidden"><div class="a t" style="right:0;top:0;font-size:12px;letter-spacing:.2px;color:#000;-webkit-text-stroke:0.25px #000">0.014</div></div>
<div class="a t" style="left:274px;width:51px;top:255.5px;text-align:center;font-family:'Liberation Serif',serif;font-weight:bold;font-size:14px;color:#000">985</div>
<div class="a" style="left:328px;width:28.5px;top:256px;height:16px;overflow:hidden"><div class="a t" style="right:0;top:0;font-size:12px;letter-spacing:.2px;color:#000;-webkit-text-stroke:0.25px #000">83</div></div>
<div class="a" style="left:363.5px;width:43.0px;top:255.5px;height:16px;overflow:hidden"><div class="a t" style="right:0;top:0;font-family:'Liberation Serif',serif;font-weight:bold;font-size:14px;color:#A00000">0.0007</div></div>
<div class="a" style="left:413.5px;width:43.0px;top:255.5px;height:16px;overflow:hidden"><div class="a t" style="right:0;top:0;font-family:'Liberation Serif',serif;font-weight:bold;font-size:14px;color:#000090">0.0011</div></div>
<div class="a" style="left:462px;width:28.5px;top:256px;height:16px;overflow:hidden"><div class="a t" style="right:0;top:0;font-size:12px;letter-spacing:.2px;color:#000;-webkit-text-stroke:0.25px #000">83</div></div>
<div class="a" style="left:496px;width:52.5px;top:256px;height:16px;overflow:hidden"><div class="a t" style="right:0;top:0;font-size:12px;letter-spacing:.2px;color:#000;-webkit-text-stroke:0.25px #000">0.0009</div></div>
<div class="a" style="left:554px;width:44.5px;top:256px;height:16px;overflow:hidden"><div class="a t" style="right:0;top:0;font-size:12px;letter-spacing:.2px;color:#000;-webkit-text-stroke:0.25px #000">139</div></div>
<div class="a" style="left:0;top:288px;width:601px;height:1px;background:#E4E2DA"></div>
<div class="a" style="left:2px;width:43.5px;top:274px;height:16px;overflow:hidden"><div class="a t" style="right:0;top:0;font-size:12px;letter-spacing:.2px;color:#000;-webkit-text-stroke:0.25px #000">13</div></div>
<div class="a" style="left:51px;width:52.5px;top:274px;height:16px;overflow:hidden"><div class="a t" style="right:0;top:0;font-size:12px;letter-spacing:.2px;color:#000;-webkit-text-stroke:0.25px #000">0.0079</div></div>
<div class="a t" style="left:274px;width:51px;top:273.5px;text-align:center;font-family:'Liberation Serif',serif;font-weight:bold;font-size:14px;color:#000">990</div>
<div class="a" style="left:328px;width:28.5px;top:274px;height:16px;overflow:hidden"><div class="a t" style="right:0;top:0;font-size:12px;letter-spacing:.2px;color:#000;-webkit-text-stroke:0.25px #000">50</div></div>
<div class="a" style="left:363.5px;width:43.0px;top:273.5px;height:16px;overflow:hidden"><div class="a t" style="right:0;top:0;font-family:'Liberation Serif',serif;font-weight:bold;font-size:14px;color:#A00000">0.0016</div></div>
<div class="a" style="left:413.5px;width:43.0px;top:273.5px;height:16px;overflow:hidden"><div class="a t" style="right:0;top:0;font-family:'Liberation Serif',serif;font-weight:bold;font-size:14px;color:#000090">0.002</div></div>
<div class="a" style="left:462px;width:28.5px;top:274px;height:16px;overflow:hidden"><div class="a t" style="right:0;top:0;font-size:12px;letter-spacing:.2px;color:#000;-webkit-text-stroke:0.25px #000">50</div></div>
<div class="a" style="left:496px;width:52.5px;top:274px;height:16px;overflow:hidden"><div class="a t" style="right:0;top:0;font-size:12px;letter-spacing:.2px;color:#000;-webkit-text-stroke:0.25px #000">0.0019</div></div>
<div class="a" style="left:554px;width:44.5px;top:274px;height:16px;overflow:hidden"><div class="a t" style="right:0;top:0;font-size:12px;letter-spacing:.2px;color:#000;-webkit-text-stroke:0.25px #000">44</div></div>
<div class="a" style="left:0;top:306px;width:601px;height:1px;background:#E4E2DA"></div>
<div class="a" style="left:2px;width:43.5px;top:292px;height:16px;overflow:hidden"><div class="a t" style="right:0;top:0;font-size:12px;letter-spacing:.2px;color:#000;-webkit-text-stroke:0.25px #000">4</div></div>
<div class="a" style="left:51px;width:52.5px;top:292px;height:16px;overflow:hidden"><div class="a t" style="right:0;top:0;font-size:12px;letter-spacing:.2px;color:#000;-webkit-text-stroke:0.25px #000">0.0041</div></div>
<div class="a" style="left:109px;width:28.5px;top:292px;height:16px;overflow:hidden"><div class="a t" style="right:0;top:0;font-size:12px;letter-spacing:.2px;color:#000;-webkit-text-stroke:0.25px #000">83</div></div>
<div class="a" style="left:144.5px;width:43.0px;top:291.5px;height:16px;overflow:hidden"><div class="a t" style="right:0;top:0;font-family:'Liberation Serif',serif;font-weight:bold;font-size:14px;color:#A00000">0.0039</div></div>
<div class="a" style="left:194.5px;width:43.0px;top:291.5px;height:16px;overflow:hidden"><div class="a t" style="right:0;top:0;font-family:'Liberation Serif',serif;font-weight:bold;font-size:14px;color:#000090">0.0044</div></div>
<div class="a" style="left:243px;width:28.5px;top:292px;height:16px;overflow:hidden"><div class="a t" style="right:0;top:0;font-size:12px;letter-spacing:.2px;color:#000;-webkit-text-stroke:0.25px #000">25</div></div>
<div class="a t" style="left:274px;width:51px;top:291.5px;text-align:center;font-family:'Liberation Serif',serif;font-weight:bold;font-size:14px;color:#000">995</div>
<div class="a" style="left:328px;width:28.5px;top:292px;height:16px;overflow:hidden"><div class="a t" style="right:0;top:0;font-size:12px;letter-spacing:.2px;color:#000;-webkit-text-stroke:0.25px #000">33</div></div>
<div class="a" style="left:363.5px;width:43.0px;top:291.5px;height:16px;overflow:hidden"><div class="a t" style="right:0;top:0;font-family:'Liberation Serif',serif;font-weight:bold;font-size:14px;color:#A00000">0.0033</div></div>
<div class="a" style="left:413.5px;width:43.0px;top:291.5px;height:16px;overflow:hidden"><div class="a t" style="right:0;top:0;font-family:'Liberation Serif',serif;font-weight:bold;font-size:14px;color:#000090">0.0038</div></div>
<div class="a" style="left:462px;width:28.5px;top:292px;height:16px;overflow:hidden"><div class="a t" style="right:0;top:0;font-size:12px;letter-spacing:.2px;color:#000;-webkit-text-stroke:0.25px #000">25</div></div>
<div class="a" style="left:496px;width:52.5px;top:292px;height:16px;overflow:hidden"><div class="a t" style="right:0;top:0;font-size:12px;letter-spacing:.2px;color:#000;-webkit-text-stroke:0.25px #000">0.0041</div></div>
<div class="a" style="left:554px;width:44.5px;top:292px;height:16px;overflow:hidden"><div class="a t" style="right:0;top:0;font-size:12px;letter-spacing:.2px;color:#000;-webkit-text-stroke:0.25px #000">4</div></div>
<div class="a" style="left:0;top:324px;width:601px;height:1px;background:#E4E2DA"></div>
<div class="a" style="left:2px;width:43.5px;top:310px;height:16px;overflow:hidden"><div class="a t" style="right:0;top:0;font-size:12px;letter-spacing:.2px;color:#000;-webkit-text-stroke:0.25px #000">811</div></div>
<div class="a" style="left:51px;width:52.5px;top:310px;height:16px;overflow:hidden"><div class="a t" style="right:0;top:0;font-size:12px;letter-spacing:.2px;color:#000;-webkit-text-stroke:0.25px #000">0.0024</div></div>
<div class="a" style="left:109px;width:28.5px;top:310px;height:16px;overflow:hidden"><div class="a t" style="right:0;top:0;font-size:12px;letter-spacing:.2px;color:#000;-webkit-text-stroke:0.25px #000">83</div></div>
<div class="a" style="left:144.5px;width:43.0px;top:309.5px;height:16px;overflow:hidden"><div class="a t" style="right:0;top:0;font-family:'Liberation Serif',serif;font-weight:bold;font-size:14px;color:#A00000">0.0018</div></div>
<div class="a" style="left:194.5px;width:43.0px;top:309.5px;height:16px;overflow:hidden"><div class="a t" style="right:0;top:0;font-family:'Liberation Serif',serif;font-weight:bold;font-size:14px;color:#000090">0.0023</div></div>
<div class="a" style="left:243px;width:28.5px;top:310px;height:16px;overflow:hidden"><div class="a t" style="right:0;top:0;font-size:12px;letter-spacing:.2px;color:#000;-webkit-text-stroke:0.25px #000">75</div></div>
<div class="a t" style="left:274px;width:51px;top:309.5px;text-align:center;font-family:'Liberation Serif',serif;font-weight:bold;font-size:14px;color:#000">1000</div>
<div class="a" style="left:328px;width:28.5px;top:310px;height:16px;overflow:hidden"><div class="a t" style="right:0;top:0;font-size:12px;letter-spacing:.2px;color:#000;-webkit-text-stroke:0.25px #000">20</div></div>
<div class="a" style="left:363.5px;width:43.0px;top:309.5px;height:16px;overflow:hidden"><div class="a t" style="right:0;top:0;font-family:'Liberation Serif',serif;font-weight:bold;font-size:14px;color:#A00000">0.0054</div></div>
<div class="a" style="left:413.5px;width:43.0px;top:309.5px;height:16px;overflow:hidden"><div class="a t" style="right:0;top:0;font-family:'Liberation Serif',serif;font-weight:bold;font-size:14px;color:#000090">0.0075</div></div>
<div class="a" style="left:462px;width:28.5px;top:310px;height:16px;overflow:hidden"><div class="a t" style="right:0;top:0;font-size:12px;letter-spacing:.2px;color:#000;-webkit-text-stroke:0.25px #000">20</div></div>
<div class="a" style="left:496px;width:52.5px;top:310px;height:16px;overflow:hidden"><div class="a t" style="right:0;top:0;font-size:12px;letter-spacing:.2px;color:#000;-webkit-text-stroke:0.25px #000">0.0042</div></div>
<div class="a" style="left:554px;width:44.5px;top:310px;height:16px;overflow:hidden"><div class="a t" style="right:0;top:0;font-size:12px;letter-spacing:.2px;color:#000;-webkit-text-stroke:0.25px #000">37</div></div>
</div>
<div class="a " style="left:641px;top:363px;width:17px;height:357px;background:#FBFBF8;border-left:1px solid #F0EFEA"></div>
<div class="a sb" style="left:642px;top:365px;width:15px;height:15px;"></div>
<div class="a " style="left:642px;top:381px;width:15px;height:271px;background:linear-gradient(90deg,#C9D8FC,#B6CBF6);border:1px solid #fff;border-radius:2px"></div>
<div class="a " style="left:646px;top:512px;width:7px;height:5px;border-top:1px solid #8FA5D8;border-bottom:1px solid #8FA5D8"></div>
<div class="a " style="left:646px;top:514px;width:7px;height:1px;background:#8FA5D8"></div>
<div class="a sb" style="left:642px;top:704px;width:15px;height:15px;"></div>
<svg class="a" style="left:645px;top:368px" width="9" height="8"><path d="M1 6 L4.5 2.5 L8 6" stroke="#4D6185" stroke-width="2" fill="none"/></svg>
<svg class="a" style="left:645px;top:707px" width="9" height="8"><path d="M1 2 L4.5 5.5 L8 2" stroke="#4D6185" stroke-width="2" fill="none"/></svg>
<div class="a " style="left:412px;top:273px;width:160px;height:122px;background:#fff;border:1px solid #000"></div>
<div class="a " style="left:413px;top:289px;width:141px;height:15px;background:#316AC5;outline:1px dotted #9DB7E8;outline-offset:-1px"></div>
<div class="a t" style="left:414.81px;top:275.88px;font-size:12.03px;color:#000;transform:scaleX(1.0327);transform-origin:0 0;">British Pound Options</div>
<div class="a t" style="left:415.18px;top:290.88px;font-size:12.03px;color:#fff;transform:scaleX(1.0344);transform-origin:0 0;">Canadian Dollar Options</div>
<div class="a t" style="left:415.19px;top:305.88px;font-size:12.03px;color:#000;transform:scaleX(1.0180);transform-origin:0 0;">Comex Gold Options</div>
<div class="a t" style="left:415.19px;top:320.88px;font-size:12.03px;color:#000;transform:scaleX(1.0061);transform-origin:0 0;">Comex Silver Options</div>
<div class="a t" style="left:415.19px;top:335.88px;font-size:12.03px;color:#000;transform:scaleX(1.0168);transform-origin:0 0;">Crude Oil Options</div>
<div class="a t" style="left:414.82px;top:350.88px;font-size:12.03px;color:#000;transform:scaleX(1.0232);transform-origin:0 0;">Euro Options</div>
<div class="a t" style="left:415.61px;top:365.88px;font-size:12.03px;color:#000;transform:scaleX(1.0300);transform-origin:0 0;">Japanese Yen Options</div>
<div class="a t" style="left:414.83px;top:380.88px;font-size:12.03px;color:#000;transform:scaleX(1.0045);transform-origin:0 0;">Mini S&amp;P Options</div>
<div class="a " style="left:555px;top:274px;width:16px;height:120px;background:#FBFBF8"></div>
<div class="a sb" style="left:555px;top:274px;width:16px;height:16px;"></div>
<div class="a " style="left:555px;top:302px;width:16px;height:74px;background:linear-gradient(90deg,#C9D8FC,#B6CBF6);border:1px solid #fff;border-radius:2px"></div>
<div class="a " style="left:559px;top:335px;width:8px;height:5px;border-top:1px solid #8FA5D8;border-bottom:1px solid #8FA5D8"></div>
<div class="a " style="left:559px;top:337px;width:8px;height:1px;background:#8FA5D8"></div>
<div class="a sb" style="left:555px;top:377px;width:16px;height:16px;"></div>
<svg class="a" style="left:559px;top:278px" width="9" height="8"><path d="M1 6 L4.5 2.5 L8 6" stroke="#4D6185" stroke-width="2" fill="none"/></svg>
<svg class="a" style="left:559px;top:381px" width="9" height="8"><path d="M1 2 L4.5 5.5 L8 2" stroke="#4D6185" stroke-width="2" fill="none"/></svg>
<div class="a " style="left:668px;top:30px;width:1px;height:701px;background:#FAF9F3"></div>
<div class="a" style="left:669px;top:32px;width:71px;height:21px;border-top:1px solid #fff;border-left:1px solid #F6F5EE;border-right:1px solid #000;box-shadow:inset -1px 0 0 #ACA899;border-top-left-radius:2px;background:#ECE9D8"></div>
<div class="a t" style="left:676.97px;top:37.81px;font-size:12.46px;color:#000;transform:scaleX(0.8329);transform-origin:0 0;">Enter Order</div>
<div class="a " style="left:748px;top:30px;width:22px;height:22px;background:#80F200;border:1px solid #000"></div>
<div class="a t" style="left:753.00px;top:35.52px;font-size:11.74px;font-weight:bold;color:#126012;transform:scaleX(1.1448);transform-origin:0 0;">W</div>
<div class="a " style="left:780px;top:30px;width:22px;height:22px;background:#80F200;border:1px solid #000"></div>
<div class="a t" style="left:786.42px;top:35.52px;font-size:11.74px;font-weight:bold;color:#126012;transform:scaleX(1.0162);transform-origin:0 0;">P</div>
<div class="a " style="left:812px;top:30px;width:22px;height:22px;background:#FF0000;border:1px solid #000"></div>
<div class="a t" style="left:818.89px;top:35.52px;font-size:11.74px;font-weight:bold;color:#A00000;transform:scaleX(0.8702);transform-origin:0 0;">O</div>
<svg class="a" style="left:845px;top:30px" width="22" height="22"><defs><radialGradient id="cf" cx=".4" cy=".35" r=".7"><stop offset="0" stop-color="#FFFFFF"/><stop offset="1" stop-color="#BCD6F2"/></radialGradient></defs><circle cx="11" cy="11" r="9.3" fill="url(#cf)" stroke="#E0947A" stroke-width="2"/><path d="M7.5 8 L11 12 L14.5 7" stroke="#3A4A66" stroke-width="1.3" fill="none"/></svg>
<div class="a " style="left:916px;top:32px;width:103px;height:20px;background:#F9F68C;border-top:1px solid #FFFFE0;border-left:1px solid #FFFFE0;border-bottom:2px solid #000;border-right:1px solid #000"></div>
<div class="a t" style="left:933.05px;top:36.32px;font-size:11.74px;color:#000;transform:scaleX(0.9099);transform-origin:0 0;">Recover Order</div>
<div class="a " style="left:740px;top:53px;width:280px;height:1px;background:#F6F5EE"></div>
<div class="a t" style="left:677.44px;top:62.66px;font-size:12.75px;color:#000;transform:scaleX(0.9237);transform-origin:0 0;">ID:</div>
<div class="a sunk" style="left:733px;top:60px;width:102px;height:21px;"></div>
<div class="a t" style="left:734.86px;top:64.97px;font-size:13.33px;font-weight:bold;color:#000;transform:scaleX(0.9663);transform-origin:0 0;">HSIG2</div>
<div class="a btn" style="left:838px;top:60px;width:21px;height:21px;"></div>
<div class="a t" style="left:846.47px;top:65.20px;font-size:11.88px;color:#000;transform:scaleX(0.8049);transform-origin:0 0;">S</div>
<div class="a t" style="left:677.67px;top:90.71px;font-size:12.46px;color:#000;transform:scaleX(0.8338);transform-origin:0 0;">PRICE</div>
<div class="a sunk" style="left:748px;top:90px;width:87px;height:21px;"></div>
<div class="a t" style="left:750.77px;top:93.57px;font-size:13.91px;font-weight:bold;color:#000;transform:scaleX(0.8901);transform-origin:0 0;">20390</div>
<div class="a t" style="left:678.01px;top:120.71px;font-size:12.46px;color:#000;transform:scaleX(0.8763);transform-origin:0 0;">QUANTITY</div>
<div class="a sunk" style="left:748px;top:119px;width:87px;height:21px;"></div>
<div class="a t" style="left:751.29px;top:123.18px;font-size:14.49px;font-weight:bold;color:#000;transform:scaleX(0.7047);transform-origin:0 0;">1</div>
<div class="a btn" style="left:838px;top:82px;width:21px;height:15px;"></div>
<div class="a btn" style="left:838px;top:97px;width:21px;height:16px;"></div>
<div class="a btn" style="left:838px;top:114px;width:21px;height:15px;"></div>
<div class="a btn" style="left:838px;top:129px;width:21px;height:15px;"></div>
<svg class="a" style="left:844px;top:88px" width="8" height="5"><path d="M0 4 H8 L4 0 Z" fill="#000"/></svg>
<svg class="a" style="left:844px;top:119px" width="8" height="5"><path d="M0 4 H8 L4 0 Z" fill="#000"/></svg>
<svg class="a" style="left:844px;top:103px" width="8" height="5"><path d="M0 0 H8 L4 4 Z" fill="#000"/></svg>
<svg class="a" style="left:844px;top:134px" width="8" height="5"><path d="M0 0 H8 L4 4 Z" fill="#000"/></svg>
<div class="a t" style="left:870.20px;top:67.67px;font-size:11.45px;color:#000;transform:scaleX(1.0020);transform-origin:0 0;">A/C</div>
<div class="a sunk" style="left:902px;top:63px;width:86px;height:22px;"></div>
<div class="a btn" style="left:971px;top:64px;width:17px;height:20px;"></div>
<svg class="a" style="left:976px;top:72px" width="8" height="5"><path d="M0 0 H7 L3.5 4 Z" fill="#000"/></svg>
<div class="a btn" style="left:996px;top:64px;width:18px;height:20px;"></div>
<div class="a t" style="left:1002.04px;top:68.47px;font-size:11.45px;color:#000;transform:scaleX(0.8962);transform-origin:0 0;">S</div>
<div class="a t" style="left:868.88px;top:92.85px;font-size:10.29px;color:#000;transform:scaleX(1.0016);transform-origin:0 0;">Name:</div>
<div class="a t" style="left:918.46px;top:92.85px;font-size:10.29px;color:#000;transform:scaleX(1.1747);transform-origin:0 0;">---</div>
<div class="a " style="left:876px;top:111px;width:13px;height:13px;background:#fff;border-top:2px solid #A8A598;border-left:2px solid #A8A598;border-right:1px solid #F4F2EA;border-bottom:1px solid #F4F2EA"></div>
<div class="a t" style="left:893.84px;top:112.67px;font-size:11.45px;color:#000;transform:scaleX(0.9385);transform-origin:0 0;">Markup By</div>
<div class="a t" style="left:966.51px;top:111.49px;font-size:11.30px;font-weight:bold;color:#000;transform:scaleX(1.0802);transform-origin:0 0;">0</div>
<div class="a " style="left:876px;top:135px;width:13px;height:13px;background:#fff;border-top:2px solid #A8A598;border-left:2px solid #A8A598;border-right:1px solid #F4F2EA;border-bottom:1px solid #F4F2EA"></div>
<div class="a t" style="left:894.00px;top:135.32px;font-size:13.62px;color:#000;transform:scaleX(0.7733);transform-origin:0 0;">Auction Order(AO)</div>
<div class="a " style="left:988px;top:135px;width:16px;height:15px;background:#F8F5B8;border-top:1px solid #fff;border-left:1px solid #fff;border-right:1px solid #404040;border-bottom:1px solid #404040"></div>
<svg class="a" style="left:991px;top:137px" width="10" height="10"><path d="M5 1 V9 M1 5 H9" stroke="#E00000" stroke-width="2.2"/></svg>
<div class="a btn" style="left:676px;top:158px;width:136px;height:40px;"></div>
<div class="a t" style="left:717.53px;top:164.51px;font-size:24.93px;color:#000;transform:scaleX(1.0404);transform-origin:0 0;-webkit-text-stroke:0.8px #000">BUY</div>
<div class="a btn" style="left:868px;top:158px;width:136px;height:40px;"></div>
<div class="a t" style="left:904.43px;top:164.51px;font-size:24.93px;color:#000;transform:scaleX(1.0393);transform-origin:0 0;-webkit-text-stroke:0.8px #000">SELL</div>
<div class="a " style="left:1018px;top:30px;width:1px;height:176px;background:#ACA899"></div>
<div class="a " style="left:668px;top:205px;width:352px;height:1px;background:#000"></div>
<div class="a " style="left:668px;top:206px;width:352px;height:1px;background:#3A3A3A"></div>
<div class="a" style="left:669px;top:207px;width:72px;height:22px;border-top:1px solid #fff;border-left:1px solid #fff;border-right:1px solid #5A584E;box-shadow:inset -1px 0 0 #ACA899;border-top-left-radius:2px;background:#ECE9D8"></div>
<div class="a t" style="left:691.80px;top:211.01px;font-size:12.46px;color:#000;transform:scaleX(0.9042);transform-origin:0 0;">Local</div>
<div class="a" style="left:742px;top:209px;width:67px;height:19px;border-top:1px solid #fff;border-left:1px solid #fff;border-right:1px solid #5A584E;box-shadow:inset -1px 0 0 #ACA899;border-top-left-radius:2px;"></div>
<div class="a t" style="left:756.95px;top:212.99px;font-size:11.96px;color:#000;transform:scaleX(0.8866);transform-origin:0 0;">Foreign</div>
<div class="a " style="left:741px;top:228px;width:279px;height:1px;background:#fff"></div>
<div class="a " style="left:1018px;top:228px;width:1px;height:503px;background:#D8D5C8"></div>
<div class="a " style="left:674px;top:246px;width:1px;height:485px;background:#F8F7F0"></div>
<div class="a" style="left:676px;top:247px;width:55px;height:21px;border-top:1px solid #fff;border-left:1px solid #fff;border-right:1px solid #000;box-shadow:inset -1px 0 0 #ACA899;border-top-left-radius:2px;background:#ECE9D8"></div>
<div class="a t" style="left:683.75px;top:252.40px;font-size:11.88px;color:#000;transform:scaleX(0.9237);transform-origin:0 0;">Working</div>
<div class="a" style="left:732px;top:249px;width:50px;height:19px;border-top:1px solid #fff;border-left:1px solid #fff;border-right:1px solid #000;box-shadow:inset -1px 0 0 #ACA899;border-top-left-radius:2px;"></div>
<div class="a t" style="left:738.83px;top:252.91px;font-size:12.46px;color:#000;transform:scaleX(0.8763);transform-origin:0 0;">Pending</div>
<div class="a" style="left:783px;top:249px;width:84px;height:19px;border-top:1px solid #fff;border-left:1px solid #fff;border-right:1px solid #000;box-shadow:inset -1px 0 0 #ACA899;border-top-left-radius:2px;"></div>
<div class="a t" style="left:791.82px;top:252.91px;font-size:12.46px;color:#000;transform:scaleX(0.8817);transform-origin:0 0;">Need Approval</div>
<div class="a" style="left:868px;top:249px;width:59px;height:19px;border-top:1px solid #fff;border-left:1px solid #fff;border-right:1px solid #000;box-shadow:inset -1px 0 0 #ACA899;border-top-left-radius:2px;"></div>
<div class="a t" style="left:875.04px;top:252.91px;font-size:12.46px;color:#000;transform:scaleX(0.8270);transform-origin:0 0;">Stop Limit</div>
<div class="a btn" style="left:952px;top:246px;width:63px;height:20px;"></div>
<div class="a t" style="left:967.26px;top:249.83px;font-size:12.32px;color:#000;transform:scaleX(0.8809);transform-origin:0 0;">Cancel</div>
<div class="a " style="left:676px;top:270px;width:340px;height:204px;border-top:2px solid #6E6B60;border-left:2px solid #6E6B60;border-right:1px solid #000;border-bottom:1px solid #000"></div>
<div class="a " style="left:678px;top:272px;width:332px;height:17px;background:#EFEDE4"></div>
<div class="a " style="left:677px;top:288px;width:333px;height:2px;background:#000"></div>
<div class="a " style="left:678px;top:290px;width:332px;height:161px;background:#808080"></div>
<div class="a t" style="left:680.15px;top:274.84px;font-size:11.01px;color:#000;transform:scaleX(0.9909);transform-origin:0 0;">Contract</div>
<div class="a " style="left:762px;top:271px;width:1px;height:17px;background:#C8C4B8"></div>
<div class="a " style="left:763px;top:271px;width:1px;height:17px;background:#fff"></div>
<div class="a t" style="left:764.63px;top:274.84px;font-size:11.01px;color:#000;transform:scaleX(0.9881);transform-origin:0 0;">Price</div>
<div class="a " style="left:807px;top:271px;width:1px;height:17px;background:#C8C4B8"></div>
<div class="a " style="left:808px;top:271px;width:1px;height:17px;background:#fff"></div>
<div class="a t" style="left:809.48px;top:274.84px;font-size:11.01px;color:#000;transform:scaleX(1.0494);transform-origin:0 0;">BQ</div>
<div class="a " style="left:840px;top:271px;width:1px;height:17px;background:#C8C4B8"></div>
<div class="a " style="left:841px;top:271px;width:1px;height:17px;background:#fff"></div>
<div class="a t" style="left:843.50px;top:274.84px;font-size:11.01px;color:#000;transform:scaleX(1.0348);transform-origin:0 0;">AQ</div>
<div class="a " style="left:873px;top:271px;width:1px;height:17px;background:#C8C4B8"></div>
<div class="a " style="left:874px;top:271px;width:1px;height:17px;background:#fff"></div>
<div class="a t" style="left:876.80px;top:274.84px;font-size:11.01px;color:#000;transform:scaleX(0.9636);transform-origin:0 0;">A/C</div>
<div class="a " style="left:953px;top:271px;width:1px;height:17px;background:#C8C4B8"></div>
<div class="a " style="left:954px;top:271px;width:1px;height:17px;background:#fff"></div>
<div class="a t" style="left:956.41px;top:274.84px;font-size:11.01px;color:#000;transform:scaleX(0.9919);transform-origin:0 0;">Status</div>
<div class="a " style="left:678px;top:451px;width:332px;height:17px;background:linear-gradient(#F3F2EC,#FEFEFB)"></div>
<div class="a sb" style="left:679px;top:452px;width:16px;height:15px;"></div>
<div class="a " style="left:695px;top:452px;width:100px;height:15px;background:linear-gradient(#C9D8FC,#B6CBF6);border:1px solid #fff;border-radius:2px"></div>
<div class="a " style="left:740px;top:456px;width:7px;height:7px;border-left:1px solid #8FA5D8;border-right:1px solid #8FA5D8"></div>
<div class="a " style="left:743px;top:456px;width:1px;height:7px;background:#8FA5D8"></div>
<div class="a sb" style="left:993px;top:452px;width:16px;height:15px;"></div>
<svg class="a" style="left:682px;top:455px" width="8" height="9"><path d="M6 1 L2.5 4.5 L6 8" stroke="#4D6185" stroke-width="2" fill="none"/></svg>
<svg class="a" style="left:997px;top:455px" width="8" height="9"><path d="M2 1 L5.5 4.5 L2 8" stroke="#4D6185" stroke-width="2" fill="none"/></svg>
<div class="a" style="left:676px;top:479px;width:41px;height:20px;border-top:1px solid #fff;border-left:1px solid #fff;border-right:1px solid #000;box-shadow:inset -1px 0 0 #ACA899;border-top-left-radius:2px;background:#ECE9D8"></div>
<div class="a t" style="left:682.81px;top:483.81px;font-size:12.46px;color:#000;transform:scaleX(0.8962);transform-origin:0 0;">Done</div>
<div class="a sunk" style="left:720px;top:479px;width:55px;height:18px;"></div>
<div class="a " style="left:784px;top:480px;width:13px;height:13px;background:#fff;border-top:2px solid #A8A598;border-left:2px solid #A8A598;border-right:1px solid #F4F2EA;border-bottom:1px solid #F4F2EA"></div>
<div class="a t" style="left:802.20px;top:480.43px;font-size:11.38px;color:#000;transform:scaleX(1.0192);transform-origin:0 0;">A/C</div>
<div class="a " style="left:832px;top:480px;width:13px;height:13px;background:#fff;border-top:2px solid #A8A598;border-left:2px solid #A8A598;border-right:1px solid #F4F2EA;border-bottom:1px solid #F4F2EA"></div>
<div class="a t" style="left:849.57px;top:479.61px;font-size:13.04px;color:#000;transform:scaleX(0.7977);transform-origin:0 0;">My Order</div>
<div class="a " style="left:904px;top:480px;width:13px;height:13px;background:#fff;border-top:2px solid #A8A598;border-left:2px solid #A8A598;border-right:1px solid #F4F2EA;border-bottom:1px solid #F4F2EA"></div>
<div class="a t" style="left:921.75px;top:479.61px;font-size:13.04px;color:#000;transform:scaleX(0.8154);transform-origin:0 0;">Done Only</div>
<div class="a btn" style="left:976px;top:478px;width:39px;height:20px;"></div>
<div class="a t" style="left:985.66px;top:482.25px;font-size:12.17px;color:#000;transform:scaleX(0.8631);transform-origin:0 0;">Print</div>
<div class="a " style="left:676px;top:502px;width:340px;height:228px;border-top:2px solid #6E6B60;border-left:2px solid #6E6B60;border-right:1px solid #000;border-bottom:1px solid #000"></div>
<div class="a " style="left:678px;top:504px;width:332px;height:16px;background:#EFEDE4"></div>
<div class="a " style="left:677px;top:520px;width:333px;height:2px;background:#000"></div>
<div class="a " style="left:678px;top:522px;width:332px;height:185px;background:#808080"></div>
<div class="a t" style="left:680.36px;top:507.04px;font-size:11.01px;color:#000;transform:scaleX(0.9762);transform-origin:0 0;">Contract</div>
<div class="a " style="left:761px;top:504px;width:1px;height:16px;background:#C8C4B8"></div>
<div class="a " style="left:762px;top:504px;width:1px;height:16px;background:#fff"></div>
<div class="a t" style="left:763.65px;top:507.04px;font-size:11.01px;color:#000;transform:scaleX(0.9604);transform-origin:0 0;">E. Price</div>
<div class="a " style="left:806px;top:504px;width:1px;height:16px;background:#C8C4B8"></div>
<div class="a " style="left:807px;top:504px;width:1px;height:16px;background:#fff"></div>
<div class="a t" style="left:808.92px;top:507.04px;font-size:11.01px;color:#000;transform:scaleX(0.9724);transform-origin:0 0;">O. Price</div>
<div class="a " style="left:851px;top:504px;width:1px;height:16px;background:#C8C4B8"></div>
<div class="a " style="left:852px;top:504px;width:1px;height:16px;background:#fff"></div>
<div class="a t" style="left:853.39px;top:507.04px;font-size:11.01px;color:#000;transform:scaleX(1.0356);transform-origin:0 0;">BQ</div>
<div class="a " style="left:884px;top:504px;width:1px;height:16px;background:#C8C4B8"></div>
<div class="a " style="left:885px;top:504px;width:1px;height:16px;background:#fff"></div>
<div class="a t" style="left:888.00px;top:507.04px;font-size:11.01px;color:#000;transform:scaleX(0.9762);transform-origin:0 0;">AQ</div>
<div class="a " style="left:917px;top:504px;width:1px;height:16px;background:#C8C4B8"></div>
<div class="a " style="left:918px;top:504px;width:1px;height:16px;background:#fff"></div>
<div class="a t" style="left:920.70px;top:507.04px;font-size:11.01px;color:#000;transform:scaleX(0.9803);transform-origin:0 0;">A/C</div>
<div class="a " style="left:989px;top:504px;width:1px;height:16px;background:#C8C4B8"></div>
<div class="a " style="left:990px;top:504px;width:1px;height:16px;background:#fff"></div>
<div class="a t" style="left:991.89px;top:507.04px;font-size:11.01px;color:#000;transform:scaleX(0.9274);transform-origin:0 0;">Clie</div>
<div class="a " style="left:678px;top:707px;width:332px;height:17px;background:linear-gradient(#F3F2EC,#FEFEFB)"></div>
<div class="a sb" style="left:679px;top:708px;width:16px;height:15px;"></div>
<div class="a " style="left:695px;top:707px;width:78px;height:16px;background:linear-gradient(#C9D8FC,#B6CBF6);border:1px solid #fff;border-radius:2px"></div>
<div class="a " style="left:729px;top:711px;width:7px;height:7px;border-left:1px solid #8FA5D8;border-right:1px solid #8FA5D8"></div>
<div class="a " style="left:732px;top:711px;width:1px;height:7px;background:#8FA5D8"></div>
<div class="a sb" style="left:993px;top:707px;width:16px;height:16px;"></div>
<svg class="a" style="left:682px;top:711px" width="8" height="9"><path d="M6 1 L2.5 4.5 L6 8" stroke="#4D6185" stroke-width="2" fill="none"/></svg>
<svg class="a" style="left:997px;top:711px" width="8" height="9"><path d="M2 1 L5.5 4.5 L2 8" stroke="#4D6185" stroke-width="2" fill="none"/></svg>
<div class="a " style="left:4px;top:730px;width:1016px;height:1px;background:#FFFFFF"></div>
<div class="a " style="left:4px;top:30px;width:1px;height:701px;background:#F4F2E8"></div></body></html>
